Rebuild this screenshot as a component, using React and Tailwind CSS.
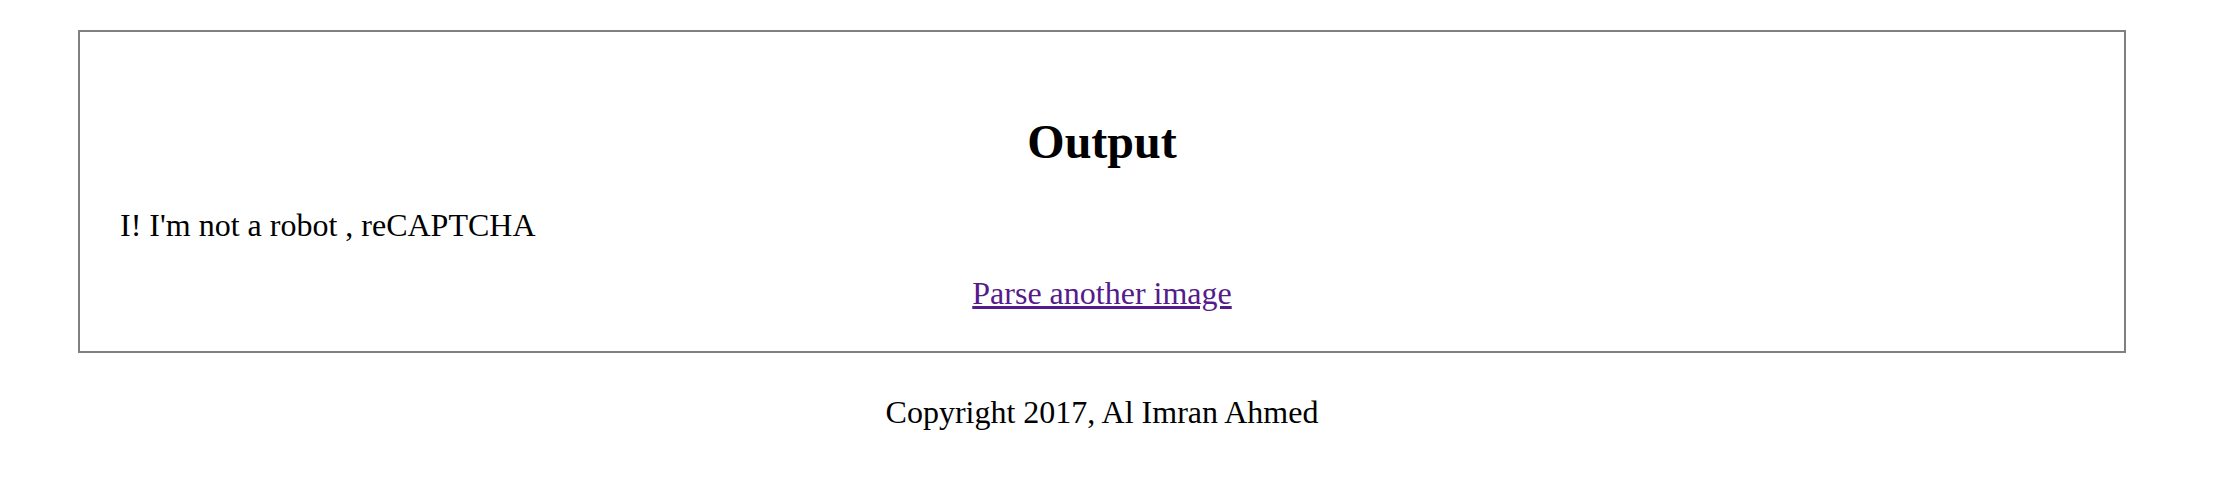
export default function App() {
  return (
    <div
      className="min-h-[486px] w-[2216px] bg-white text-black pt-[30px]"
      style={{ fontFamily: '"Liberation Serif", "Times New Roman", serif' }}
    >
      <div className="ml-[78px] w-[2048px] h-[323px] border-2 border-[#808080] flex flex-col pt-[82px] px-[40px]">
        <h1 className="text-[48px] leading-[56px] font-bold text-center">Output</h1>
        <p className="mt-[37px] text-[32px] leading-[36px]">I! I&apos;m not a robot , reCAPTCHA</p>
        <div className="mt-[32px] text-center text-[32px] leading-[36px]">
          <a href="#" className="text-[#551a8b] underline">Parse another image</a>
        </div>
      </div>
      <p className="mt-[41px] text-center text-[32px] leading-[36px] w-[2204px]">
        Copyright 2017, Al Imran Ahmed
      </p>
    </div>
  );
}
